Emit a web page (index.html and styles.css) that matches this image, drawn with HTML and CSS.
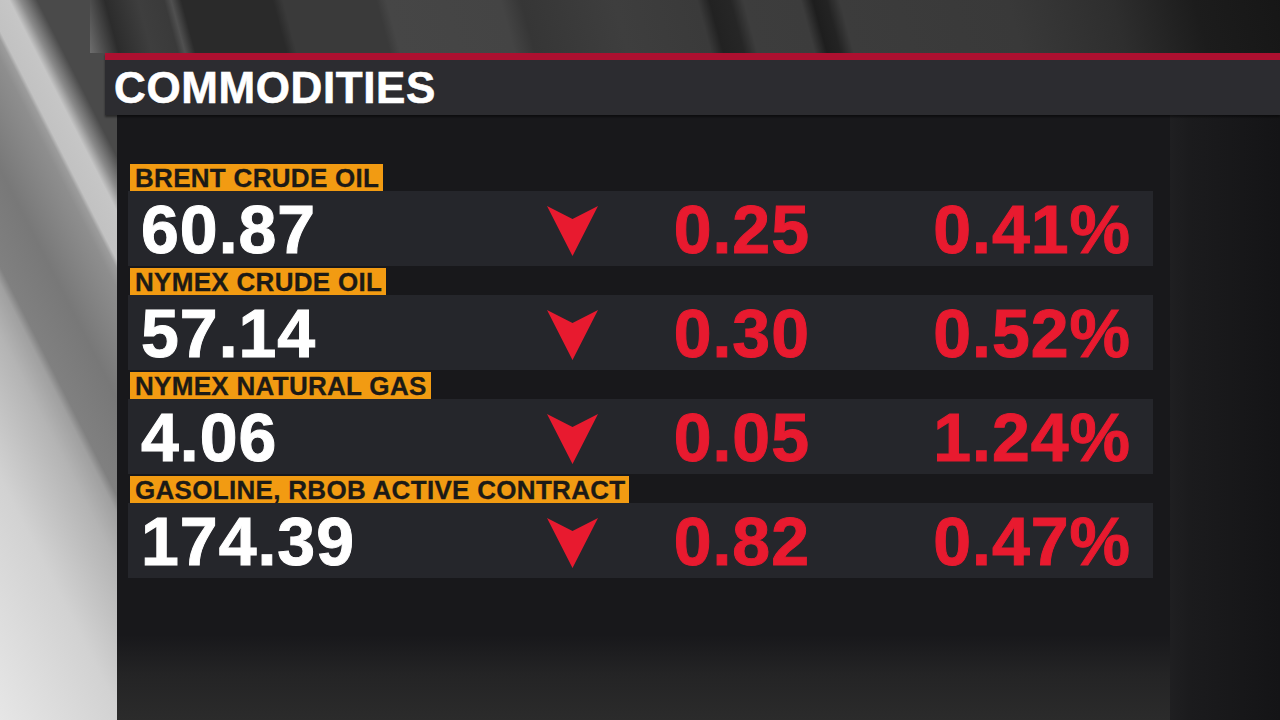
FILE: index.html
```html
<!DOCTYPE html>
<html lang="en">
<head>
    <meta charset="UTF-8">
    <meta name="viewport" content="width=device-width, initial-scale=1.0">
    <title>Commodities</title>
    <link rel="stylesheet" href="styles.css">
</head>
<body>

    <div class="sky"></div>

    <header class="title-bar">
        <h1>COMMODITIES</h1>
    </header>

    <main class="stage">
        <section class="panel">

            <div class="quote">
                <div class="quote-name">BRENT CRUDE OIL</div>
                <div class="quote-line">
                    <span class="last">60.87</span>
                    <svg class="arrow" viewBox="0 0 51 50"><polygon points="0,0 25.5,13 51,0 25.5,50"/></svg>
                    <span class="chg">0.25</span>
                    <span class="chg">0.41%</span>
                </div>
            </div>

            <div class="quote">
                <div class="quote-name">NYMEX CRUDE OIL</div>
                <div class="quote-line">
                    <span class="last">57.14</span>
                    <svg class="arrow" viewBox="0 0 51 50"><polygon points="0,0 25.5,13 51,0 25.5,50"/></svg>
                    <span class="chg">0.30</span>
                    <span class="chg">0.52%</span>
                </div>
            </div>

            <div class="quote">
                <div class="quote-name">NYMEX NATURAL GAS</div>
                <div class="quote-line">
                    <span class="last">4.06</span>
                    <svg class="arrow" viewBox="0 0 51 50"><polygon points="0,0 25.5,13 51,0 25.5,50"/></svg>
                    <span class="chg">0.05</span>
                    <span class="chg">1.24%</span>
                </div>
            </div>

            <div class="quote">
                <div class="quote-name">GASOLINE, RBOB ACTIVE CONTRACT</div>
                <div class="quote-line">
                    <span class="last">174.39</span>
                    <svg class="arrow" viewBox="0 0 51 50"><polygon points="0,0 25.5,13 51,0 25.5,50"/></svg>
                    <span class="chg">0.82</span>
                    <span class="chg">0.47%</span>
                </div>
            </div>

        </section>
        <div class="side"></div>
    </main>

</body>
</html>
```

FILE: styles.css
```css
body, html { margin: 0; padding: 0; }
body {
    width: 1280px; height: 720px; overflow: hidden;
    font-family: "Liberation Sans", Arimo, Helvetica, sans-serif;
    background:
        linear-gradient(63deg, #e6e6e6 0px, #d2d2d2 110px, #b4b4b4 175px, #a0a0a0 198px, #808080 206px, #787878 250px, #8e8e8e 300px, #9c9c9c 309px, #c2c2c2 313px, #c6c6c6 335px, #8a8a8a 345px, #4a4a4a 360px);
}

/* top strip with the dark diagonal bands */
.sky {
    height: 53px; margin-left: 90px;
    background:
        linear-gradient(75deg,
            #6e6e6e 0px, #4c4c4c 14px, #2c2c2c 28px, #3e3e3e 60px, #3a3a3a 85px,
            #505050 92px, #2a2a2a 102px, #2a2a2a 190px, #3a3a3a 200px, #3a3a3a 290px,
            #464646 300px, #444 410px, #363636 430px, #3e3e3e 520px,
            #3a3a3a 600px, #222 612px, #262626 632px, #3d3d3d 645px, #3c3c3c 700px,
            #1e1e1e 712px, #232323 725px, #3c3c3c 738px, #393939 900px,
            #2e2e2e 1000px, #1c1c1c 1080px, #141414 1200px);
}

.title-bar {
    margin-left: 105px; height: 55px;
    border-top: 7px solid #ad1030;
    background: #2c2c30;
    display: flex; align-items: center;
    padding-left: 9px;
    box-shadow: 0 2px 2px rgba(0, 0, 0, 0.45);
    position: relative; z-index: 1;
}
.title-bar h1 { margin: 0; font-size: 44px; line-height: 1; font-weight: 700; color: #fff; letter-spacing: 0.6px; -webkit-text-stroke: 0.6px #fff; }

.stage { display: flex; margin-left: 117px; height: 605px; }

.panel {
    width: 1053px; flex: none; box-sizing: border-box;
    padding: 49px 17px 0 11px;
    display: flex; flex-direction: column; gap: 2px;
    background: linear-gradient(to bottom, #18181b 0px, #18181b 520px, #242425 560px, #2b2b2b 605px);
}
.side { flex: 1; background: linear-gradient(90deg, #1f1f21 0px, #1b1b1d 20px, #18181a 60px, #141416 110px); }

.quote { display: flex; flex-direction: column; }

.quote-name {
    align-self: flex-start;
    margin-left: 2px; padding: 0 4px 0 5px;
    height: 27px; line-height: 29px;
    background: #f29b12; color: #1c1a16;
    font-size: 26px; font-weight: 700; letter-spacing: 0.3px;
    -webkit-text-stroke: 0.3px #1c1a16;
}

.quote-line {
    display: grid;
    grid-template-columns: 406px 50px 213px 1fr;
    align-items: center;
    height: 75px; padding: 0 22px 0 13px;
    background: #25262b;
}

.last, .chg { font-size: 68px; line-height: 1; font-weight: 700; letter-spacing: 1px; -webkit-text-stroke: 1px currentColor; }
.last { color: #fff; }
.chg { color: #e81a2f; text-align: right; }

.arrow { width: 51px; height: 50px; margin-top: 4px; fill: #e81a2f; }
```
